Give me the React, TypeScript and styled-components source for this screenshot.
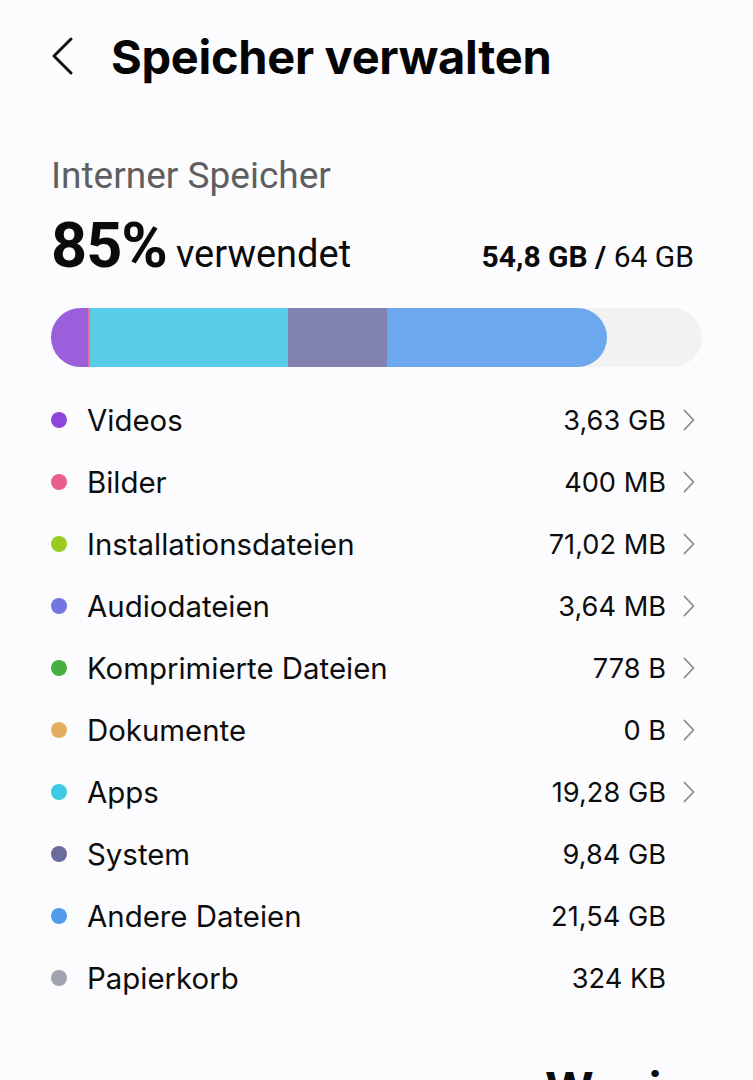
import React from 'react';
import styled, {createGlobalStyle} from 'styled-components';

const GlobalStyle = createGlobalStyle`
    html, body {
        margin: 0;
        padding: 0;
        background: #fcfcfe;
    }
    body {
        font-family: Inter, "Noto Sans", sans-serif;
        color: #0b0b0b;
        overflow: hidden;
    }
`;

const Page = styled.div`
    width: 753px;
    height: 1080px;
    overflow: hidden;
    background: #fcfcfe;
`;

const Header = styled.header`
    display: flex;
    align-items: center;
    height: 112px;
    padding-left: 48px;
    gap: 35px;
`;

const BackButton = styled.button`
    display: flex;
    align-items: center;
    justify-content: center;
    width: 28px;
    height: 40px;
    padding: 0;
    border: none;
    background: none;
    cursor: pointer;
`;

const Title = styled.h1`
    margin: 0;
    font-family: Inter, sans-serif;
    font-size: 47px;
    font-weight: 700;
    letter-spacing: -0.3px;
    color: #050505;
`;

const Section = styled.section`
    padding: 0 51px;
`;

const SectionLabel = styled.div`
    margin-top: 40px;
    font-family: Roboto, sans-serif;
    font-size: 37px;
    color: #5f5f62;
    line-height: 48px;
`;

const UsageRow = styled.div`
    display: flex;
    align-items: baseline;
    justify-content: space-between;
    margin-top: 10px;
    padding-right: 8px;
`;

const Percent = styled.span`
    font-family: Roboto, sans-serif;
    font-size: 63px;
    font-weight: 700;
    letter-spacing: -1px;
    line-height: 72px;
`;

const PercentLabel = styled.span`
    font-family: Roboto, sans-serif;
    font-size: 38px;
    margin-left: 9px;
`;

const Capacity = styled.span`
    font-family: Roboto, sans-serif;
    font-size: 30px;
`;

const Bold = styled.b`
    font-weight: 700;
`;

const Bar = styled.div`
    display: flex;
    height: 59px;
    margin-top: 26px;
    border-radius: 30px;
    background: #f2f2f2;
    overflow: hidden;
`;

const Used = styled.div`
    display: flex;
    height: 100%;
    border-radius: 0 30px 30px 0;
    overflow: hidden;
`;

const Segment = styled.div<{$color: string}>`
    height: 100%;
    background: ${p => p.$color};
`;

const List = styled.ul`
    list-style: none;
    margin: 22px 0 0;
    padding: 0 7px 0 0;
`;

const Item = styled.li`
    display: flex;
    align-items: center;
    height: 62px;
`;

const Dot = styled.span<{$color: string}>`
    width: 16px;
    height: 16px;
    border-radius: 50%;
    background: ${p => p.$color};
    flex-shrink: 0;
`;

const ItemLabel = styled.span`
    flex: 1;
    margin-left: 20px;
    font-size: 29.4px;
    color: #0d0d0d;
`;

const ItemValue = styled.span`
    font-size: 27.2px;
    color: #0d0d0d;
`;

const Chevron = styled.span`
    display: flex;
    align-items: center;
    justify-content: flex-end;
    width: 29px;
    height: 30px;
`;

const NextHeading = styled.h2`
    margin: 51px 0 0;
    padding-left: 494px;
    font-family: Inter, sans-serif;
    font-size: 47px;
    font-weight: 700;
    white-space: nowrap;
`;

type Category = {
    name: string;
    size: string;
    color: string;
    link: boolean;
};

const categories: Category[] = [
    {name: 'Videos', size: '3,63 GB', color: '#8f45db', link: true},
    {name: 'Bilder', size: '400 MB', color: '#ea5d89', link: true},
    {name: 'Installationsdateien', size: '71,02 MB', color: '#9acc20', link: true},
    {name: 'Audiodateien', size: '3,64 MB', color: '#7176e0', link: true},
    {name: 'Komprimierte Dateien', size: '778 B', color: '#46ae3f', link: true},
    {name: 'Dokumente', size: '0 B', color: '#e3ae60', link: true},
    {name: 'Apps', size: '19,28 GB', color: '#3ec9e2', link: true},
    {name: 'System', size: '9,84 GB', color: '#6a6c9e', link: false},
    {name: 'Andere Dateien', size: '21,54 GB', color: '#509ceb', link: false},
    {name: 'Papierkorb', size: '324 KB', color: '#a0a2ae', link: false},
];

// widths in px of the 651px track
const segments = [
    {color: '#9c5fdb', width: 37},
    {color: '#e8729a', width: 2},
    {color: '#58cde7', width: 198},
    {color: '#8283b1', width: 99},
    {color: '#6da8ee', width: 220},
];

const App = () => {
    return <Page>
        <GlobalStyle/>
        <Header>
            <BackButton aria-label="Zurück">
                <svg width="24" height="38" viewBox="0 0 24 38" fill="none">
                    <path d="M21 2 L4 19 L21 36" stroke="#111" strokeWidth="3" strokeLinecap="round" strokeLinejoin="round"/>
                </svg>
            </BackButton>
            <Title>Speicher verwalten</Title>
        </Header>
        <Section>
            <SectionLabel>Interner Speicher</SectionLabel>
            <UsageRow>
                <div>
                    <Percent>85%</Percent>
                    <PercentLabel>verwendet</PercentLabel>
                </div>
                <Capacity><Bold>54,8 GB /</Bold> 64 GB</Capacity>
            </UsageRow>
            <Bar>
                <Used>
                    {segments.map((s, i) => <Segment key={i} $color={s.color} style={{width: s.width}}/>)}
                </Used>
            </Bar>
            <List>
                {categories.map(c => <Item key={c.name}>
                    <Dot $color={c.color}/>
                    <ItemLabel>{c.name}</ItemLabel>
                    <ItemValue>{c.size}</ItemValue>
                    <Chevron>
                        {c.link && <svg width="12" height="22" viewBox="0 0 12 22" fill="none">
                            <path d="M1.5 1.5 L10.5 11 L1.5 20.5" stroke="#8a8a8e" strokeWidth="1.8" strokeLinecap="round" strokeLinejoin="round"/>
                        </svg>}
                    </Chevron>
                </Item>)}
            </List>
            <NextHeading>Wenig genutzt</NextHeading>
        </Section>
    </Page>;
};

export default App;
